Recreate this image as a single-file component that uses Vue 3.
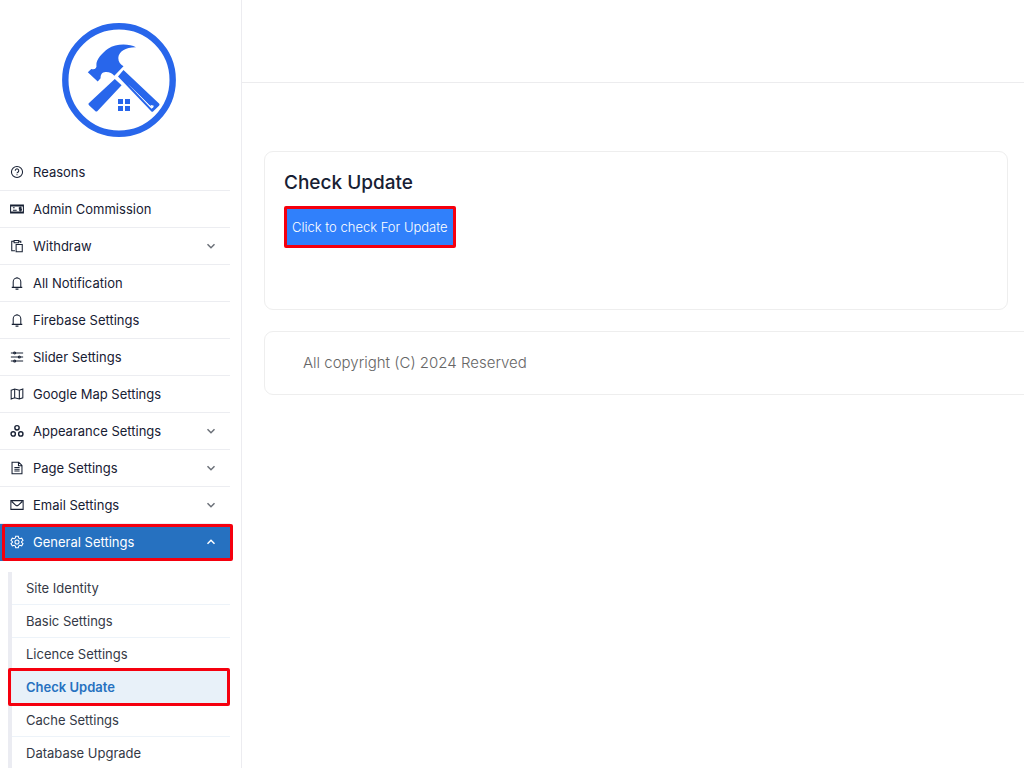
<template>
  <div class="layout">
    <aside class="sidebar">
      <a href="#" class="logo" aria-label="Home">
        <svg width="114" height="114" viewBox="0 0 114 114" fill="#2866eb">
          <circle cx="57" cy="57" r="53.7" fill="none" stroke="#2866eb" stroke-width="6.4" />
          <path d="M74 24.200C64 24 56.500 28.500 56.300 35C56.300 39 58.500 41.500 61.500 43.300L52.300 52.800C50.500 50.500 47 48.700 43.500 49C40 49.300 38.500 51.500 38.600 55.200L35.700 58.500L25.800 49.300L29.300 46C33 47 35 45 34.400 42C34 36.500 40.500 29.500 46 25.700C54 20.300 67 20.500 74 24.200Z" />
          <path d="M52.800 56L59.600 62.300L35.500 88C34.700 88.800 34 88.800 33.200 88L27 82.200C26.300 81.500 26.300 80.800 27 80.100Z" />
          <path d="M61.500 47L97 80.600C97.700 81.300 97.700 82 97 82.700L91.300 88.300C90.600 89 89.900 89 89.200 88.300L56 53.500Z" />
          <path d="M66 61L89.500 85.800Q91.800 85 91.800 82.800L87.500 81.500Z" fill="#fff" />
          <path d="M66.500 60.500L88.500 81.200L89.500 83.600L87 81.500Z" />
          <path d="M56 76h5v5h-5zM63 76h5v5h-5zM56 83h5v5h-5zM63 83h5v5h-5z" />
        </svg>
      </a>

      <nav>
        <a
          v-for="item in menu"
          :key="item.label"
          href="#"
          class="item"
          :class="{ active: item.open }"
        >
          <svg class="icon" viewBox="0 0 24 24" v-html="icons[item.icon]"></svg>
          <span>{{ item.label }}</span>
          <svg v-if="item.children" class="arrow" viewBox="0 0 10 10">
            <path :d="item.open ? 'M1.500 6.700L5 3.300L8.500 6.700' : 'M1.500 3.300L5 6.700L8.500 3.300'" />
          </svg>
        </a>

        <div class="sub">
          <a
            v-for="name in general"
            :key="name"
            href="#"
            class="subitem"
            :class="{ current: name === current }"
          >{{ name }}</a>
        </div>
      </nav>
    </aside>

    <div class="main">
      <header class="topbar"></header>
      <section class="card">
        <h1>Check Update</h1>
        <button type="button" class="btn">Click to check For Update</button>
      </section>
      <footer class="footer">All copyright (C) 2024 Reserved</footer>
    </div>
  </div>
</template>

<script setup>
import { ref } from "vue";

const current = ref("Check Update");

const menu = [
  { label: "Reasons", icon: "help" },
  { label: "Admin Commission", icon: "money" },
  { label: "Withdraw", icon: "paste", children: true },
  { label: "All Notification", icon: "bell" },
  { label: "Firebase Settings", icon: "bell" },
  { label: "Slider Settings", icon: "sliders" },
  { label: "Google Map Settings", icon: "map" },
  { label: "Appearance Settings", icon: "circles", children: true },
  { label: "Page Settings", icon: "page", children: true },
  { label: "Email Settings", icon: "mail", children: true },
  { label: "General Settings", icon: "gear", children: true, open: true },
];

const general = [
  "Site Identity",
  "Basic Settings",
  "Licence Settings",
  "Check Update",
  "Cache Settings",
  "Database Upgrade",
];

const icons = {
  help: '<circle cx="12" cy="12" r="9.500"/><path d="M9 9.700a3 3 0 1 1 4.500 2.600c-1 .6-1.500 1-1.500 2M12 15.700v2"/>',
  money: '<path d="M1 5h22v14H1zM1 7h22M1 17h22"/><path d="M5 10h3M5 14h6.500M17.500 7.500v9M20 9.700h-4v2.300h3.500v2.300h-4"/>',
  paste: '<path d="M8.500 20H3V4h4M15 4h3.500v3M7 2.500h8v4H7zM10.500 9.500H21V22H10.500z"/>',
  bell: '<path d="M3 19.500h18M5.500 19.500V10a6.500 6.500 0 0 1 13 0v9.500M12 1.500v2M9.500 22.500h5"/>',
  sliders: '<path d="M1.500 5h21M1.500 12h21M1.500 19h21"/><circle cx="8" cy="5" r="1.700"/><circle cx="16" cy="12" r="1.700"/><circle cx="8" cy="19" r="1.700"/>',
  map: '<path d="M2 5.500L8 3.500L16 5.500L22 3.500V18.500L16 20.500L8 18.500L2 20.500zM8 3.500v15M16 5.500v15"/>',
  circles: '<circle cx="12" cy="6.500" r="3.700" stroke-width="2.400"/><circle cx="5.500" cy="17" r="3.700" stroke-width="2.400"/><circle cx="18.500" cy="17" r="3.700" stroke-width="2.400"/>',
  page: '<path d="M3.500 2H15l5.500 5.500V22h-17zM14.500 2v6h6M7.500 11h9M7.500 14h9M7.500 17h9"/>',
  mail: '<path d="M1.500 4.500h21v15h-21zM3 6l7 6.500q2 1.500 4 0l7-6.500"/>',
  gear: '<path d="M9.800 2h4.400l.7 3.200 2 1.200 3.200-1 2.200 3.800-2.500 2.200v1.200l2.500 2.200-2.200 3.800-3.200-1-2 1.200-.7 3.200H9.800l-.7-3.200-2-1.200-3.200 1-2.200-3.800 2.500-2.200v-1.200L1.700 9.200l2.200-3.800 3.200 1 2-1.200z"/><circle cx="12" cy="12" r="3.500"/>',
};
</script>

<style>
body { margin: 0; background: #fff; }
</style>

<style scoped>
.layout { display: flex; height: 100vh; overflow: hidden; font-family: Inter, "Open Sans", sans-serif; color: #172033; }
.sidebar { flex: none; box-sizing: border-box; width: 242px; border-right: 1px solid #ececf0; overflow: hidden; }
.logo { display: block; padding: 23px 0 17px 62px; height: 114px; }
.logo svg { display: block; }
a { color: inherit; text-decoration: none; }
nav { width: 230px; }
.item { position: relative; display: flex; align-items: center; gap: 9px; box-sizing: border-box; height: 37px; padding: 0 14px 0 10px; border-bottom: 1px solid #ecedf1; font-size: 13px; line-height: 20px; }
.item span { flex: 1; }
.icon { width: 14px; height: 14px; fill: none; stroke: currentColor; stroke-width: 1.800; }
.arrow { width: 10px; height: 10px; fill: none; stroke: #6b7078; stroke-width: 1.500; }
.active { background: #2671c0; border-color: #2671c0; color: #fff; }
.active .arrow { stroke: #fff; }
.active::after { content: ""; position: absolute; inset: 0 -3px -1px 2px; border: 3px solid #f5000e; border-radius: 2px; }
.sub { margin: 11px 0 0 8px; border-left: 4px solid #ebecf2; }
.subitem { position: relative; display: block; box-sizing: border-box; height: 33px; padding-left: 14px; border-bottom: 1px solid #edf3f9; font-size: 13px; line-height: 33px; color: #343946; }
.current { background: #e8f1f9; color: #2671c0; font-weight: 600; }
.current::after { content: ""; position: absolute; inset: -3px 0 -3px -4px; border: 3px solid #f5000e; border-radius: 2px; }
.main { flex: 1; min-width: 0; }
.topbar { height: 82px; border-bottom: 1px solid #ececee; }
.card { box-sizing: border-box; min-height: 159px; margin: 68px 16px 21px 22px; padding: 18px 19px; border: 1px solid #eee; border-radius: 9px; }
h1 { margin: 0 0 10px; font-size: 19px; line-height: 26px; font-weight: 500; }
.btn { display: block; height: 42px; padding: 0 5px; border: 3px solid #f5000e; border-radius: 2px; background: #3080fb; color: #fff; font: 300 13px/20px Inter, "Open Sans", sans-serif; }
.footer { box-sizing: border-box; height: 64px; margin: 0 -16px 0 22px; padding: 0 38px; border: 1px solid #eee; border-radius: 9px; font-size: 15px; font-weight: 300; line-height: 62px; color: #666; }
</style>
